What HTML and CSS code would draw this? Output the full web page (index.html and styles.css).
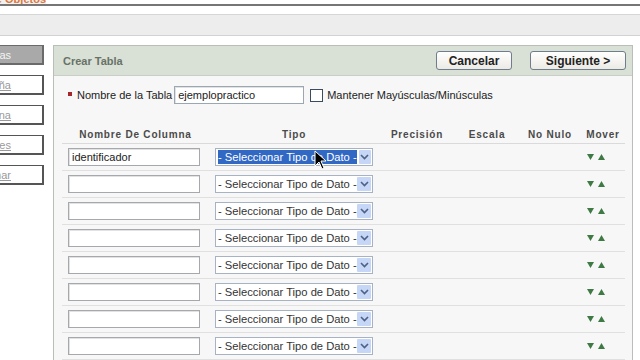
FILE: index.html
```html
<!DOCTYPE html>
<html lang="es">
<head>
  <meta charset="UTF-8">
  <title>Crear Tabla</title>
  <link rel="stylesheet" href="styles.css">
</head>
<body>
  <div class="topstrip"><span>Explorador de Objetos</span></div>
  <div class="topline"></div>
  <div class="band-white"></div>
  <div class="band-gray"></div>

  <div class="main">
    <div class="sidenav">
      <a class="navbtn active"><span>Tablas</span></a>
      <a class="navbtn"><span>Crear Pestaña</span></a>
      <a class="navbtn"><span>Columna</span></a>
      <a class="navbtn"><span>Restricciones</span></a>
      <a class="navbtn"><span>Confirmar</span></a>
    </div>

    <div class="panel">
      <div class="panel-head">
        <span class="panel-title">Crear Tabla</span>
        <button class="btn btn-cancel">Cancelar</button>
        <button class="btn btn-next">Siguiente &gt;</button>
      </div>

      <div class="panel-body">
        <div class="name-row">
          <span class="req"></span>
          <label class="name-label">Nombre de la Tabla</label>
          <span class="field name-field">ejemplopractico</span>
          <span class="checkbox"></span>
          <label class="name-label">Mantener Mayúsculas/Minúsculas</label>
        </div>

        <div class="cols">
          <div class="cols-head">
            <span>Nombre De Columna</span>
            <span>Tipo</span>
            <span>Precisión</span>
            <span>Escala</span>
            <span>No Nulo</span>
            <span>Mover</span>
          </div>

          <div class="cols-row">
            <div class="cell"><span class="field col-field">identificador</span></div>
            <div class="cell">
              <div class="combo">
                <span class="combo-text selected">- Seleccionar Tipo de Dato -</span>
                <span class="combo-btn"><svg width="9" height="6" viewBox="0 0 9 6"><path d="M1 1l3.5 3.5L8 1" fill="none" stroke="#4d6185" stroke-width="1.6"/></svg></span>
                <svg class="cursor" width="13" height="20" viewBox="0 0 13 20"><path d="M1 1v15l4-4 3 7 2-1-3-7h5z" fill="#000" stroke="#fff" stroke-width="1"/></svg>
              </div>
            </div>
            <div class="cell"></div><div class="cell"></div><div class="cell"></div>
            <div class="cell move"><svg width="20" height="8" viewBox="0 0 20 8"><path d="M0 1h7l-3.5 6z" fill="#3f7a45"/><path d="M11 7h7l-3.5-6z" fill="#3f7a45"/></svg></div>
          </div>

          <div class="cols-row">
            <div class="cell"><span class="field col-field"></span></div>
            <div class="cell"><div class="combo"><span class="combo-text">- Seleccionar Tipo de Dato -</span><span class="combo-btn"><svg width="9" height="6" viewBox="0 0 9 6"><path d="M1 1l3.5 3.5L8 1" fill="none" stroke="#4d6185" stroke-width="1.6"/></svg></span></div></div>
            <div class="cell"></div><div class="cell"></div><div class="cell"></div>
            <div class="cell move"><svg width="20" height="8" viewBox="0 0 20 8"><path d="M0 1h7l-3.5 6z" fill="#3f7a45"/><path d="M11 7h7l-3.5-6z" fill="#3f7a45"/></svg></div>
          </div>

          <div class="cols-row">
            <div class="cell"><span class="field col-field"></span></div>
            <div class="cell"><div class="combo"><span class="combo-text">- Seleccionar Tipo de Dato -</span><span class="combo-btn"><svg width="9" height="6" viewBox="0 0 9 6"><path d="M1 1l3.5 3.5L8 1" fill="none" stroke="#4d6185" stroke-width="1.6"/></svg></span></div></div>
            <div class="cell"></div><div class="cell"></div><div class="cell"></div>
            <div class="cell move"><svg width="20" height="8" viewBox="0 0 20 8"><path d="M0 1h7l-3.5 6z" fill="#3f7a45"/><path d="M11 7h7l-3.5-6z" fill="#3f7a45"/></svg></div>
          </div>

          <div class="cols-row">
            <div class="cell"><span class="field col-field"></span></div>
            <div class="cell"><div class="combo"><span class="combo-text">- Seleccionar Tipo de Dato -</span><span class="combo-btn"><svg width="9" height="6" viewBox="0 0 9 6"><path d="M1 1l3.5 3.5L8 1" fill="none" stroke="#4d6185" stroke-width="1.6"/></svg></span></div></div>
            <div class="cell"></div><div class="cell"></div><div class="cell"></div>
            <div class="cell move"><svg width="20" height="8" viewBox="0 0 20 8"><path d="M0 1h7l-3.5 6z" fill="#3f7a45"/><path d="M11 7h7l-3.5-6z" fill="#3f7a45"/></svg></div>
          </div>

          <div class="cols-row">
            <div class="cell"><span class="field col-field"></span></div>
            <div class="cell"><div class="combo"><span class="combo-text">- Seleccionar Tipo de Dato -</span><span class="combo-btn"><svg width="9" height="6" viewBox="0 0 9 6"><path d="M1 1l3.5 3.5L8 1" fill="none" stroke="#4d6185" stroke-width="1.6"/></svg></span></div></div>
            <div class="cell"></div><div class="cell"></div><div class="cell"></div>
            <div class="cell move"><svg width="20" height="8" viewBox="0 0 20 8"><path d="M0 1h7l-3.5 6z" fill="#3f7a45"/><path d="M11 7h7l-3.5-6z" fill="#3f7a45"/></svg></div>
          </div>

          <div class="cols-row">
            <div class="cell"><span class="field col-field"></span></div>
            <div class="cell"><div class="combo"><span class="combo-text">- Seleccionar Tipo de Dato -</span><span class="combo-btn"><svg width="9" height="6" viewBox="0 0 9 6"><path d="M1 1l3.5 3.5L8 1" fill="none" stroke="#4d6185" stroke-width="1.6"/></svg></span></div></div>
            <div class="cell"></div><div class="cell"></div><div class="cell"></div>
            <div class="cell move"><svg width="20" height="8" viewBox="0 0 20 8"><path d="M0 1h7l-3.5 6z" fill="#3f7a45"/><path d="M11 7h7l-3.5-6z" fill="#3f7a45"/></svg></div>
          </div>

          <div class="cols-row">
            <div class="cell"><span class="field col-field"></span></div>
            <div class="cell"><div class="combo"><span class="combo-text">- Seleccionar Tipo de Dato -</span><span class="combo-btn"><svg width="9" height="6" viewBox="0 0 9 6"><path d="M1 1l3.5 3.5L8 1" fill="none" stroke="#4d6185" stroke-width="1.6"/></svg></span></div></div>
            <div class="cell"></div><div class="cell"></div><div class="cell"></div>
            <div class="cell move"><svg width="20" height="8" viewBox="0 0 20 8"><path d="M0 1h7l-3.5 6z" fill="#3f7a45"/><path d="M11 7h7l-3.5-6z" fill="#3f7a45"/></svg></div>
          </div>

          <div class="cols-row">
            <div class="cell"><span class="field col-field"></span></div>
            <div class="cell"><div class="combo"><span class="combo-text">- Seleccionar Tipo de Dato -</span><span class="combo-btn"><svg width="9" height="6" viewBox="0 0 9 6"><path d="M1 1l3.5 3.5L8 1" fill="none" stroke="#4d6185" stroke-width="1.6"/></svg></span></div></div>
            <div class="cell"></div><div class="cell"></div><div class="cell"></div>
            <div class="cell move"><svg width="20" height="8" viewBox="0 0 20 8"><path d="M0 1h7l-3.5 6z" fill="#3f7a45"/><path d="M11 7h7l-3.5-6z" fill="#3f7a45"/></svg></div>
          </div>
        </div>
      </div>
    </div>
  </div>
</body>
</html>
```

FILE: styles.css
```css
body {
  margin: 0;
  background: #fff;
  font-family: 'Liberation Sans', Arial, sans-serif;
  font-size: 11px;
  color: #222;
  overflow: hidden;
}

/* top chrome */
.topstrip {
  height: 4px;
  width: 46px;
  overflow: hidden;
  display: flex;
  justify-content: flex-end;
  background: #f1f1f1;
}

.topstrip span {
  flex-shrink: 0;
  margin-top: -7px;
  font-size: 11px;
  line-height: 12px;
  font-weight: bold;
  color: #e0763a;
  white-space: nowrap;
}

.topline {
  height: 2px;
  background: #767676;
}

.band-white {
  height: 8px;
  border-bottom: 1px solid #d6d6d6;
}

.band-gray {
  height: 20px;
  background: #ededed;
  border-bottom: 1px solid #d2d2d2;
}

.main {
  display: flex;
  gap: 9px;
  padding-top: 9px;
}

/* left nav */
.sidenav {
  width: 44px;
  display: flex;
  flex-direction: column;
  gap: 10px;
}

.navbtn {
  height: 17px;
  display: flex;
  justify-content: flex-end;
  align-items: center;
  overflow: hidden;
  padding-right: 31px;
  border: 1px solid #555;
  border-right-width: 2px;
  border-bottom-width: 2px;
  border-left: none;
  background: #fff;
  color: #9a9a9a;
  text-decoration: underline;
  font-size: 11px;
}

.navbtn span {
  flex-shrink: 0;
  white-space: nowrap;
}

.navbtn.active {
  background: #a9a9a9;
  color: #f4f4f4;
  text-decoration: none;
  border-color: #6a6a6a;
}

/* panel */
.panel {
  width: 578px;
  border: 1px solid #b9bfb8;
  background: #f7f7f7;
}

.panel-head {
  height: 29px;
  display: flex;
  align-items: center;
  padding: 0 6px 0 9px;
  background: #d9e0d6;
  border-bottom: 1px solid #c9cfc7;
}

.panel-title {
  flex: 1;
  font-size: 11px;
  font-weight: bold;
  color: #687266;
}

.btn {
  height: 19px;
  padding: 0;
  font-family: 'Liberation Sans', Arial, sans-serif;
  font-size: 12px;
  font-weight: bold;
  color: #222;
  background: linear-gradient(#ffffff, #eceae4);
  border: 1px solid #6f7d8c;
  border-radius: 3px;
}

.btn-cancel {
  width: 76px;
  margin-right: 18px;
}

.btn-next {
  width: 96px;
}

.panel-body {
  padding: 10px 0 0 8px;
}

.name-row {
  display: flex;
  align-items: center;
  padding-left: 6px;
  height: 18px;
}

.req {
  width: 4px;
  height: 4px;
  background: #a3262d;
  margin: -3px 5px 0 0;
}

.name-label {
  margin-right: 2px;
}

.field {
  display: block;
  box-sizing: border-box;
  height: 18px;
  line-height: 16px;
  padding: 0 3px;
  background: #fff;
  border: 1px solid #a5a9ad;
  box-shadow: inset 1px 1px 0 #e2e2e2;
  white-space: nowrap;
}

.name-field {
  width: 130px;
  border-color: #9ba7b3;
}

.checkbox {
  width: 11px;
  height: 11px;
  margin: 0 4px 0 6px;
  border: 1px solid #3b4c5e;
  background: #fff;
}

/* columns table */
.cols {
  width: 563px;
  margin-top: 21px;
}

.cols-head,
.cols-row {
  display: grid;
  grid-template-columns: 147px 170px 76px 64px 62px 44px;
}

.cols-head {
  height: 18px;
  align-items: center;
  border-bottom: 1px solid #dadada;
  font-size: 10px;
  font-weight: bold;
  letter-spacing: 0.8px;
  color: #4a4a4a;
  text-align: center;
}

.cols-row {
  height: 26px;
  border-bottom: 1px solid #e0e0e0;
}

.cell {
  display: flex;
  align-items: center;
  padding-left: 6px;
}

.col-field {
  width: 132px;
}

.combo {
  position: relative;
  box-sizing: border-box;
  width: 158px;
  height: 18px;
  display: flex;
  align-items: center;
  padding: 0 1px 0 2px;
  background: #fff;
  border: 1px solid #a7b3c3;
  font-size: 11.2px;
}

.combo-text {
  flex: 1;
  line-height: 14px;
  white-space: nowrap;
  color: #333;
}

.combo-text.selected {
  background: #3168c4;
  color: #fff;
  margin-right: 2px;
}

.combo-btn {
  width: 14px;
  height: 14px;
  display: flex;
  align-items: center;
  justify-content: center;
  background: #c5d6f6;
  border-radius: 1px;
}

.cursor {
  position: absolute;
  left: 98px;
  top: 1px;
}

.move {
  padding-left: 6px;
}
```
